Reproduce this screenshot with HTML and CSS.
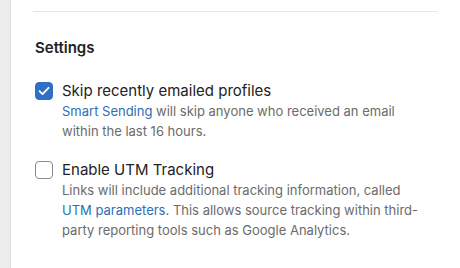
FILE: index.html
```html
<!DOCTYPE html>
<html lang="en">
<head>
  <meta charset="UTF-8">
  <title>Settings</title>
  <link rel="stylesheet" href="styles.css">
</head>
<body>
  <div class="sidebar"></div>
  <div class="main">
    <hr class="divider">
    <h3 class="title">Settings</h3>

    <label class="setting">
      <span class="box checked">
        <svg viewBox="0 0 18 18" width="18" height="18"><path d="M4.5 9.2l3 3 6-6.4" fill="none" stroke="#fff" stroke-width="1.8" stroke-linecap="round" stroke-linejoin="round"/></svg>
      </span>
      <span class="text">
        <span class="label">Skip recently emailed profiles</span>
        <span class="desc"><a href="#">Smart Sending</a> will skip anyone who received an email within the last 16 hours.</span>
      </span>
    </label>

    <label class="setting">
      <span class="box"></span>
      <span class="text">
        <span class="label">Enable UTM Tracking</span>
        <span class="desc">Links will include additional tracking information, called <a href="#">UTM parameters</a>. This allows source tracking within third-party reporting tools such as Google Analytics.</span>
      </span>
    </label>
  </div>
</body>
</html>
```

FILE: styles.css
```css
body {
  margin: 0;
  display: flex;
  height: 268px;
  font-family: Inter, "Noto Sans", sans-serif;
  color: #222;
  background: #fff;
  overflow: hidden;
}
.sidebar {
  width: 10px;
  background: #ededed;
  border-right: 1px solid #e2e2e2;
}
.main {
  flex: 1;
  padding: 11px 22px 0 22px;
}
.divider {
  margin: 0;
  border: none;
  border-top: 1px solid #e6e6e6;
}
.title {
  margin: 26px 0 23px 2px;
  font-size: 15px;
  line-height: 20px;
  font-weight: 600;
}
.setting {
  display: flex;
  gap: 9px;
  margin: 0 0 19px 2px;
  cursor: pointer;
}
.box {
  flex: none;
  width: 16px;
  height: 16px;
  border: 1px solid #8a8a8a;
  border-radius: 4px;
  margin-top: 1px;
  display: flex;
}
.box.checked {
  background: #2f6fc6;
  border-color: #2f6fc6;
}
.box svg {
  margin: -1px;
}
.text {
  display: flex;
  flex-direction: column;
  width: 366px;
}
.label {
  font-size: 15px;
  line-height: 20px;
}
.desc {
  font-size: 13px;
  line-height: 20px;
  color: #6b6b6b;
}
.desc a {
  color: #2e6eb5;
  text-decoration: none;
}
```
